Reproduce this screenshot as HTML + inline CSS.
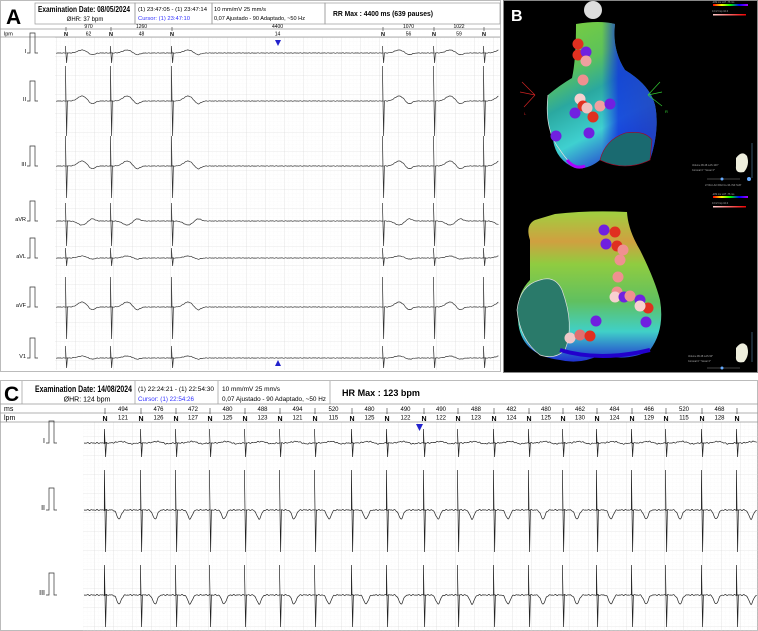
<!DOCTYPE html>
<html><head><meta charset="utf-8">
<style>
html,body{margin:0;padding:0;background:#fff;width:758px;height:631px;overflow:hidden;font-family:"Liberation Sans",Arial,sans-serif}
svg{position:absolute;left:0;top:0}
</style></head><body>
<svg id="s" width="758" height="631" viewBox="0 0 758 631" xmlns="http://www.w3.org/2000/svg">
<defs>
<pattern id="gm" width="3.8" height="3.8" patternUnits="userSpaceOnUse"><path d="M3.8 0V3.8H0" fill="none" stroke="#eee" stroke-width="0.5" stroke-dasharray="0.8 0.8"/></pattern>
<pattern id="gM" width="19" height="19" patternUnits="userSpaceOnUse"><rect width="19" height="19" fill="url(#gm)"/><path d="M19 0V19H0" fill="none" stroke="#d6d6d6" stroke-width="0.6"/></pattern>
<linearGradient id="h1" x1="0" y1="0" x2="0.4" y2="1"><stop offset="0" stop-color="#7fcf3a"/><stop offset="0.35" stop-color="#5cc25a"/><stop offset="0.55" stop-color="#2aa8a0"/><stop offset="0.8" stop-color="#3fd0d0"/><stop offset="1" stop-color="#2a5fd0"/></linearGradient>
<linearGradient id="h1b" x1="0" y1="0" x2="1" y2="0"><stop offset="0" stop-color="#000" stop-opacity="0"/><stop offset="0.5" stop-color="#1030e0" stop-opacity="0"/><stop offset="0.65" stop-color="#1030e0" stop-opacity="0.8"/><stop offset="1" stop-color="#2040c0" stop-opacity="0.9"/></linearGradient>
<linearGradient id="h2" x1="0" y1="0" x2="0" y2="1"><stop offset="0" stop-color="#9fd040"/><stop offset="0.2" stop-color="#d0a040"/><stop offset="0.35" stop-color="#90cc40"/><stop offset="0.6" stop-color="#60c060"/><stop offset="0.8" stop-color="#40d0c8"/><stop offset="1" stop-color="#2030d0"/></linearGradient>
<linearGradient id="lat" x1="0" x2="1"><stop offset="0" stop-color="#f00"/><stop offset="0.25" stop-color="#ff0"/><stop offset="0.5" stop-color="#0f0"/><stop offset="0.75" stop-color="#00f"/><stop offset="1" stop-color="#a0f"/></linearGradient>
<linearGradient id="imp" x1="0" x2="1"><stop offset="0" stop-color="#fcc"/><stop offset="1" stop-color="#e00"/></linearGradient>
</defs>

<!-- PANEL A -->
<rect x="0.5" y="0.5" width="500" height="371" fill="#fff" stroke="#bbb"/>
<rect x="55" y="37" width="445" height="333" fill="url(#gM)"/>
<text x="6" y="24" font-size="21" font-weight="bold">A</text>
<g fill="none" stroke="#999" stroke-width="0.7">
<rect x="35" y="3" width="100" height="21"/><rect x="135" y="3" width="77" height="21"/><rect x="212" y="3" width="113" height="21"/><rect x="325" y="3" width="175" height="21"/>
<line x1="0" y1="29" x2="500" y2="29"/><line x1="0" y1="37" x2="500" y2="37"/>
</g>
<text x="38" y="12" font-size="8" font-weight="bold" textLength="92" lengthAdjust="spacingAndGlyphs">Examination Date: 08/05/2024</text>
<text x="85" y="21" font-size="6" text-anchor="middle">ØHR: 37 bpm</text>
<text x="138" y="11" font-size="5.5" textLength="69" lengthAdjust="spacingAndGlyphs">(1) 23:47:05 - (1) 23:47:14</text>
<text x="138" y="20" font-size="5.5" fill="#33f" textLength="52" lengthAdjust="spacingAndGlyphs">Cursor:  (1) 23:47:10</text>
<text x="214" y="11" font-size="5.5" textLength="52" lengthAdjust="spacingAndGlyphs">10 mm/mV    25 mm/s</text>
<text x="214" y="20" font-size="5.5" textLength="91" lengthAdjust="spacingAndGlyphs">0,07 Ajustado - 90 Adaptado, ~50 Hz</text>
<text x="333" y="16" font-size="7.5" font-weight="bold" textLength="100" lengthAdjust="spacingAndGlyphs">RR Max : 4400 ms (639 pauses)</text>
<text x="4" y="35.5" font-size="5.5">lpm</text>
<g id="aHdr" font-size="5" text-anchor="middle"></g>
<polygon points="275,40 281,40 278,46" fill="#22c"/>
<polygon points="275,366 281,366 278,360" fill="#22c"/>
<g id="aLab" font-size="5.5" text-anchor="end"></g>
<g id="aEcg" fill="none" stroke="#333" stroke-width="0.7"></g>

<!-- PANEL B -->
<rect x="503" y="0" width="255" height="373" fill="#000"/>
<rect x="503.5" y="0.5" width="254" height="372" fill="none" stroke="#888"/>
<text x="511" y="21" font-size="16" font-weight="bold" fill="#fff">B</text>
<circle cx="593" cy="10" r="9" fill="#ddd"/>
<path d="M576 24 Q600 20 615 24 Q612 50 625 70 Q650 85 655 105 Q660 130 650 160 Q625 170 600 160 Q588 170 575 168 Q556 160 553 140 Q545 120 548 95 Q560 85 572 78 Q576 60 576 24Z" fill="url(#h1)"/>
<path d="M576 24 Q600 20 615 24 Q612 50 625 70 Q650 85 655 105 Q660 130 650 160 Q625 170 600 160 Q588 170 575 168 Q556 160 553 140 Q545 120 548 95 Q560 85 572 78 Q576 60 576 24Z" fill="url(#h1b)"/>
<path d="M600 160 Q605 140 625 133 Q645 130 652 140 L650 160 Q625 172 600 160Z" fill="#1a6a70" stroke="#a02" stroke-width="0.6"/>
<path d="M548 95 Q544 130 560 150 Q570 165 578 168" fill="none" stroke="#ddd" stroke-width="0.7"/>
<path d="M567 160 Q575 170 585 166" fill="none" stroke="#a0f" stroke-width="3"/>
<g stroke="#c22" stroke-width="0.7"><line x1="535" y1="95" x2="522" y2="82"/><line x1="535" y1="95" x2="520" y2="92"/><line x1="535" y1="95" x2="524" y2="107"/></g>
<text x="524" y="115" font-size="4" fill="#c22">L</text>
<g stroke="#3c3" stroke-width="0.7"><line x1="648" y1="95" x2="660" y2="82"/><line x1="648" y1="95" x2="662" y2="92"/><line x1="648" y1="95" x2="662" y2="106"/></g>
<text x="665" y="113" font-size="4" fill="#3c3">R</text>
<path d="M555 214 Q590 210 627 212 Q628 230 640 250 Q655 280 660 300 Q665 330 650 350 Q630 362 600 355 Q580 365 560 360 Q520 355 518 320 Q515 295 530 280 Q530 260 530 240 Q525 225 535 220Z" fill="url(#h2)"/>
<path d="M540 280 Q555 275 562 290 Q575 325 565 350 Q555 360 540 355 Q520 340 517 310 Q520 285 540 280Z" fill="#2a7a6a" stroke="#ddd" stroke-width="0.7"/>
<path d="M560 350 Q600 362 650 350" fill="none" stroke="#20c" stroke-width="4"/>
<g id="balls"></g>
<g font-size="2.5" fill="#aaa">
<rect x="713" y="4" width="35" height="2" fill="url(#lat)"/><rect x="713" y="14" width="33" height="1.5" fill="url(#imp)"/>
<text x="712" y="3">-209 ms    LAT    -76 ms</text><text x="712" y="12">0.0      Z Imp      10.0</text>
<path d="M736 158 Q742 150 747 156 Q750 165 744 172 Q735 174 736 166Z" fill="#eed"/>
<text x="692" y="166">Volume 99.48   LAS  100°</text><text x="692" y="171">Coronal  0 °    Sonar  0°</text>
<line x1="752" y1="143" x2="752" y2="178" stroke="#58a" stroke-width="0.6"/>
<line x1="707" y1="179" x2="740" y2="179" stroke="#888" stroke-width="0.5"/><circle cx="722" cy="179" r="1.5" fill="#6af"/><circle cx="749" cy="179" r="2" fill="#6af"/>
<text x="705" y="186">LT  RA  LAO  RAO  LL  RL  INF  SUP</text>
<rect x="713" y="196" width="35" height="2" fill="url(#lat)"/><rect x="713" y="206" width="33" height="1.5" fill="url(#imp)"/>
<text x="712" y="195">-209 ms    LAT    -76 ms</text><text x="712" y="204">0.0      Z Imp      10.0</text>
<path d="M736 348 Q742 340 747 346 Q750 355 744 362 Q735 364 736 356Z" fill="#eed"/>
<text x="688" y="357">Volume 99.48   LAS  90°</text><text x="688" y="362">Coronal  0 °    Sonar  0°</text>
<line x1="752" y1="332" x2="752" y2="362" stroke="#58a" stroke-width="0.6"/>
<line x1="707" y1="368" x2="740" y2="368" stroke="#888" stroke-width="0.5"/><circle cx="722" cy="368" r="1.5" fill="#6af"/>
</g>

<!-- PANEL C -->
<rect x="0.5" y="380.5" width="757" height="250" fill="#fff" stroke="#bbb"/>
<rect x="83" y="422" width="675" height="209" fill="url(#gM)"/>
<g fill="none" stroke="#999" stroke-width="0.7">
<line x1="22" y1="381" x2="22" y2="404"/><line x1="135" y1="381" x2="135" y2="404"/><line x1="218" y1="381" x2="218" y2="404"/><line x1="330" y1="381" x2="330" y2="404"/>
<line x1="0" y1="404" x2="758" y2="404"/><line x1="0" y1="413" x2="758" y2="413"/><line x1="0" y1="422" x2="758" y2="422"/>
</g>
<text x="4" y="401" font-size="21" font-weight="bold">C</text>
<text x="35" y="392" font-size="9.5" font-weight="bold" textLength="97" lengthAdjust="spacingAndGlyphs">Examination Date: 14/08/2024</text>
<text x="87" y="401.5" font-size="7" text-anchor="middle">ØHR: 124 bpm</text>
<text x="138" y="391" font-size="6.5" textLength="76" lengthAdjust="spacingAndGlyphs">(1) 22:24:21 - (1) 22:54:30</text>
<text x="138" y="401" font-size="6.5" fill="#33f" textLength="56" lengthAdjust="spacingAndGlyphs">Cursor:  (1) 22:54:26</text>
<text x="222" y="391" font-size="6.5" textLength="58" lengthAdjust="spacingAndGlyphs">10 mm/mV    25 mm/s</text>
<text x="222" y="401" font-size="6.5" textLength="104" lengthAdjust="spacingAndGlyphs">0,07 Ajustado - 90 Adaptado, ~50 Hz</text>
<text x="342" y="396" font-size="9" font-weight="bold" textLength="78" lengthAdjust="spacingAndGlyphs">HR Max : 123 bpm</text>
<text x="4" y="411" font-size="7">ms</text>
<text x="4" y="420" font-size="7">lpm</text>
<g id="cHdr" font-size="6" text-anchor="middle"></g>
<polygon points="416,424 423,424 419.5,431" fill="#22c"/>
<g id="cLab" font-size="7" text-anchor="end"></g>
<g id="cEcg" fill="none" stroke="#222" stroke-width="0.7"></g>
</svg>
<script>
var NS="http://www.w3.org/2000/svg";
function el(p,t,a,txt){var e=document.createElementNS(NS,t);for(var k in a)e.setAttribute(k,a[k]);if(txt!=null)e.textContent=txt;document.getElementById(p).appendChild(e);return e;}
var aN=[66,111,172,383,434,484],aRR=[["970","62"],["1260","48"],["4400","14"],["1070","56"],["1022","59"]];
aN.forEach(function(x){el("aHdr","text",{x:x,y:36,"font-size":5.5,"font-weight":"bold"},"N");el("aHdr","line",{x1:x,y1:27,x2:x,y2:31,stroke:"#333","stroke-width":0.6});});
for(var i=0;i<5;i++){var m=(aN[i]+aN[i+1])/2;el("aHdr","text",{x:m,y:28},aRR[i][0]);el("aHdr","text",{x:m,y:35.5},aRR[i][1]);}
function ecg(g,x0,x1,y,beats,up,dn,tw,tType,noise){
 var pts=[];
 for(var x=x0;x<=x1;x+=0.7){
  var v=0;
  for(var b=0;b<beats.length;b++){
   var dx=x-beats[b];
   if(tType==0){v+=-tw*Math.exp(-Math.pow((dx-16)/6,2))+tw*0.6*Math.exp(-Math.pow((dx-26)/4,2));}
   else{v+=tw*Math.exp(-Math.pow((dx-14)/3,2));}
  }
  v+=noise*Math.sin(x*1.7)*Math.sin(x*0.37);
  pts.push([x,y+v]);
 }
 var s="",bi=0,sorted=beats.slice().sort(function(a,b){return a-b});
 pts.forEach(function(p,i){
  s+=(i?"L":"M")+p[0].toFixed(1)+" "+p[1].toFixed(1);
  if(bi<sorted.length&&p[0]<=sorted[bi]&&(i+1>=pts.length||pts[i+1][0]>sorted[bi])){
    var bx=sorted[bi];
    s+="L"+(bx-0.6)+" "+(y-up)+"L"+(bx+0.6)+" "+(y+dn)+"L"+(bx+1.4)+" "+y;
    bi++;
  }
 });
 el(g,"path",{d:s});
}
function calib(g,x,y,h,lab,fs){
 el(g,"path",{d:"M"+x+" "+y+"h3v-"+h+"h5v"+h+"h3",fill:"none",stroke:"#333","stroke-width":0.7});
 el(g.replace("Ecg","Lab"),"text",{x:x-1,y:y,"font-size":fs},lab);
}
var aLeads=[["I",53,7,10,3,0.3],["II",101,35,35,5,0.3],["III",166,30,32,5,0.3],["aVR",221,18,25,-4,0.3],["aVL",258,10,8,2,0.3],["aVF",307,30,32,5,0.3],["V1",358,12,10,2,0.3]];
aLeads.forEach(function(L){calib("aEcg",27,L[1],20,L[0],5.5);ecg("aEcg",56,499,L[1],aN,L[2],L[3],L[4],0,L[5]);});
var cN=[105,141,176,210,245,280,315,352,387,424,458,494,529,563,597,632,666,702,737];
var cRR=[["494","121"],["476","126"],["472","127"],["480","125"],["488","123"],["494","121"],["520","115"],["480","125"],["490","122"],["490","122"],["488","123"],["482","124"],["480","125"],["462","130"],["484","124"],["466","129"],["520","115"],["468","128"]];
cN.forEach(function(x){el("cHdr","text",{x:x,y:421,"font-size":7,"font-weight":"bold"},"N");el("cHdr","line",{x1:x,y1:408,x2:x,y2:414,stroke:"#333","stroke-width":0.6});});
for(var i=0;i<cRR.length;i++){var m=(cN[i]+cN[i+1])/2;el("cHdr","text",{x:m,y:411},cRR[i][0]);el("cHdr","text",{x:m,y:419.5},cRR[i][1]);}
var cLeads=[["I",443,14,14,1.5,0,0.6],["II",510,40,42,9,1,0.6],["III",595,30,32,9,1,0.6]];
cLeads.forEach(function(L){calib("cEcg",46,L[1],22,L[0],7);ecg("cEcg",84,757,L[1],cN,L[2],L[3],L[4],L[5],L[6]);});
var balls=[[578,44,"#e03020"],[578,55,"#e03020"],[586,52,"#7020e0"],[586,61,"#f0a0a0"],[583,80,"#f09090"],[580,99,"#f8d0d0"],[583,106,"#e03020"],[587,108,"#f0c0c0"],[600,106,"#f0a0a0"],[593,117,"#e03020"],[610,104,"#7020e0"],[575,113,"#7020e0"],[589,133,"#7020e0"],[556,136,"#7020e0"],[604,230,"#7020e0"],[615,232,"#e03020"],[617,246,"#e03020"],[606,244,"#7020e0"],[623,250,"#f09090"],[620,260,"#f09090"],[618,277,"#f09090"],[617,292,"#f09090"],[615,297,"#f8d0d0"],[624,297,"#7020e0"],[630,296,"#f09090"],[640,300,"#7020e0"],[648,308,"#e03020"],[640,306,"#f8d0d0"],[646,322,"#7020e0"],[596,321,"#7020e0"],[570,338,"#f0c8c8"],[580,335,"#e07070"],[590,336,"#e03020"]];
balls.forEach(function(b){el("balls","circle",{cx:b[0],cy:b[1],r:5.5,fill:b[2]});});
</script>
</body></html>
